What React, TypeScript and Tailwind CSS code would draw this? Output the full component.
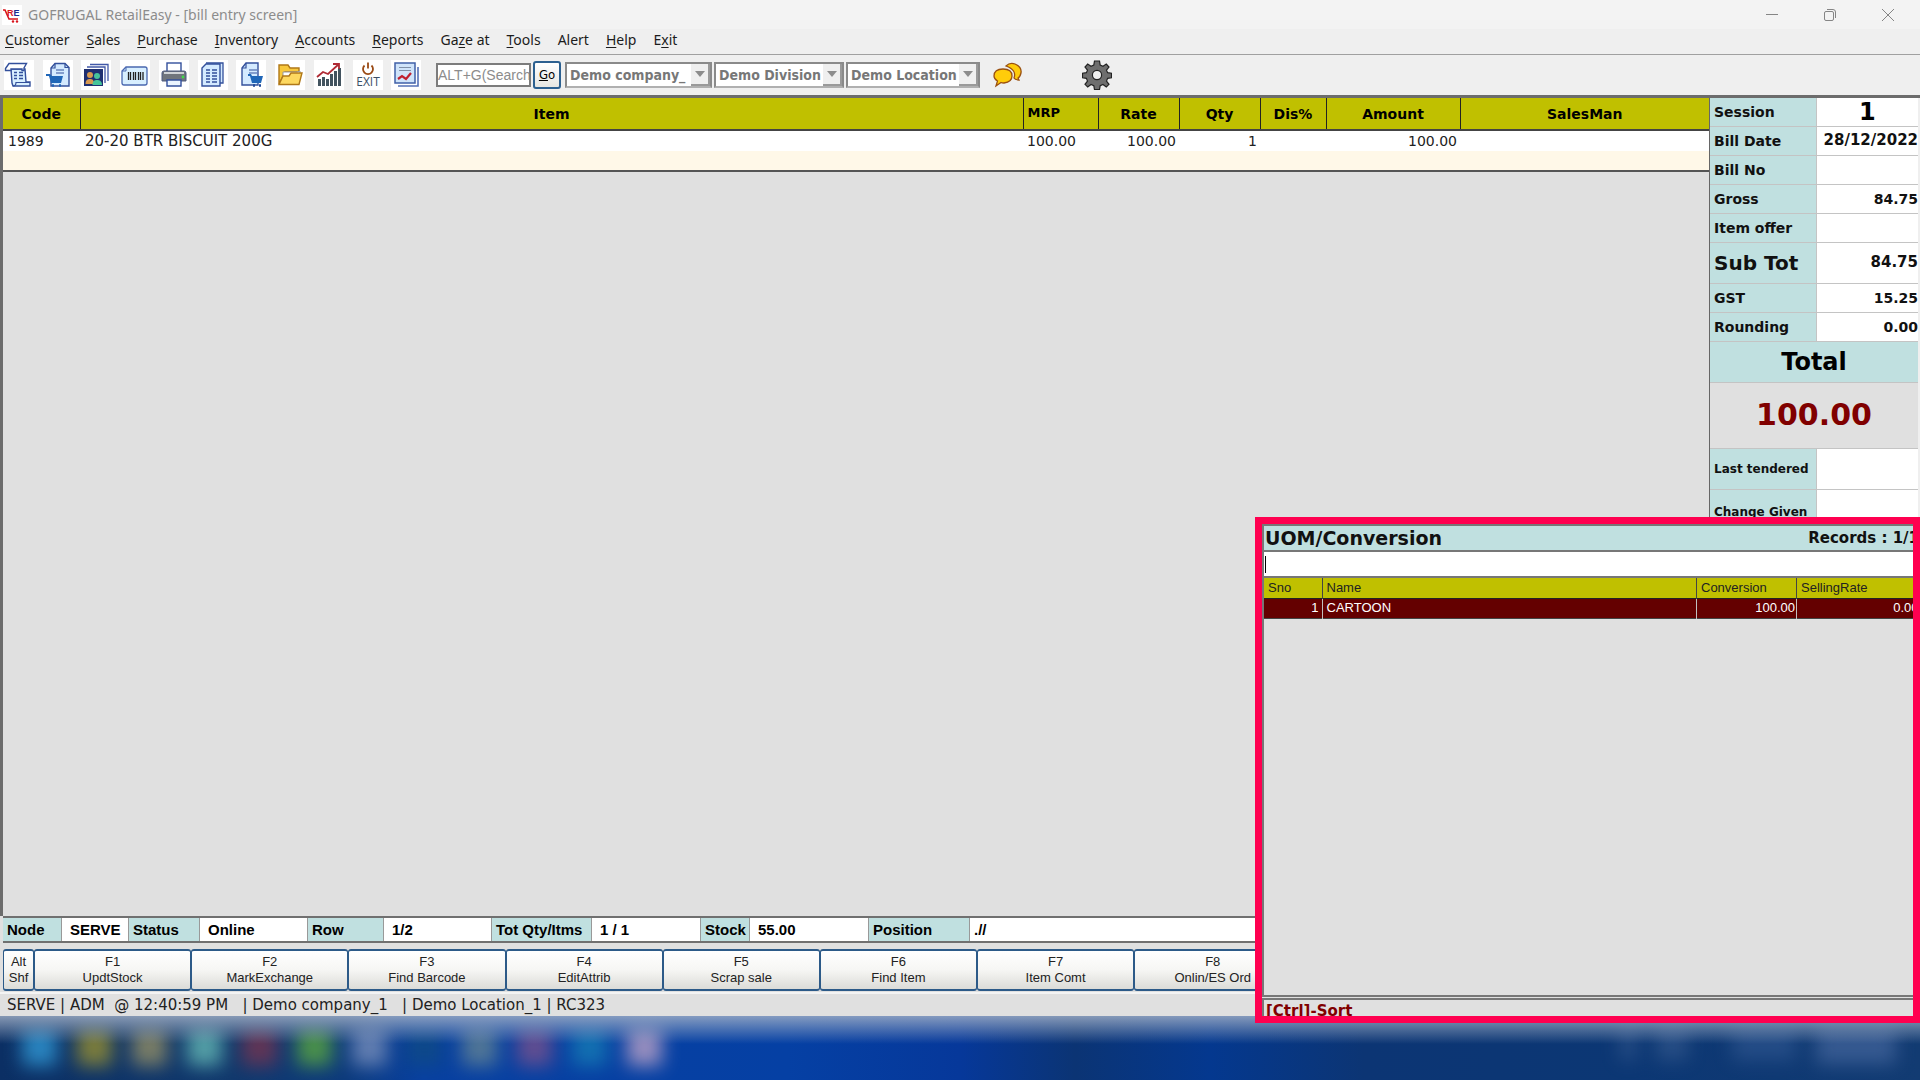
import type { ReactNode } from 'react';

const MENUS = [
  { label: 'Customer', key: 0 },
  { label: 'Sales', key: 0 },
  { label: 'Purchase', key: 0 },
  { label: 'Inventory', key: 0 },
  { label: 'Accounts', key: 0 },
  { label: 'Reports', key: 0 },
  { label: 'Gaze at', key: 2 },
  { label: 'Tools', key: 0 },
  { label: 'Alert', key: -1 },
  { label: 'Help', key: 0 },
  { label: 'Exit', key: 1 },
];

const F_KEYS = [
  ['F1', 'UpdtStock'],
  ['F2', 'MarkExchange'],
  ['F3', 'Find Barcode'],
  ['F4', 'EditAttrib'],
  ['F5', 'Scrap sale'],
  ['F6', 'Find Item'],
  ['F7', 'Item Comt'],
  ['F8', 'Onlin/ES Ord'],
];

const STATUS = [
  { label: 'Node', value: 'SERVE', labelW: 'w-[59px]', valueW: 'w-[67px]', pad: 'pl-2' },
  { label: 'Status', value: 'Online', labelW: 'w-[71px]', valueW: 'w-[108px]', pad: 'pl-2' },
  { label: 'Row', value: '1/2', labelW: 'w-[76px]', valueW: 'w-[108px]', pad: 'pl-2' },
  { label: 'Tot Qty/Itms', value: '1 / 1', labelW: 'w-[100px]', valueW: 'w-[109px]', pad: 'pl-2' },
  { label: 'Stock', value: '55.00', labelW: 'w-[49px]', valueW: 'w-[119px]', pad: 'pl-2' },
  { label: 'Position', value: './/', labelW: 'w-[101px]', valueW: 'flex-1', pad: 'pl-1' },
];

const TASK_ICONS = [
  'bg-[#2f93cf]',
  'bg-[#8f8a35]',
  'bg-[#8c8a66]',
  'bg-[#5fb0b0]',
  'bg-[#6f3552]',
  'bg-[#55a043]',
  'bg-[#7089b8]',
  'bg-[#0f4a86]',
  'bg-[#5d7f95]',
  'bg-[#70508f]',
  'bg-[#1578b4]',
  'bg-[#b09cc4]',
];

function ReceiptIcon() {
  return (
    <>
      <path d="M7 9h14l1 13h4v4H9l-1-3z" fill="#d8efff" stroke="#33509c" strokeWidth="1.4" />
      <path d="M9 26q3 0 3-3.500h14" stroke="#33509c" strokeWidth="1.200" />
      <path d="M1.500 8.500 5 3.500h17.500L20 8v2.500h-2V9H7v1.500H1.500z" fill="#fff" stroke="#33509c" strokeWidth="1.4" />
      <path d="M10 12.500h3m2 0h4m-9 3h3m2 0h4m-9 3h3m2 0h4" stroke="#33509c" strokeWidth="1.500" />
    </>
  );
}

function PageCartIcon({ flip }: { flip?: boolean }) {
  return (
    <>
      <path d={flip ? 'M12 3.500h10l4 4V26H8V8z' : 'M10 3h12v22H6V8z'} fill="#d4eaff" stroke="#33509c" strokeWidth="1.4" />
      <path d={flip ? 'M12 3.500V8H8m14-4.500v4h4' : 'M10 3v5H6'} stroke="#33509c" strokeWidth="1.200" />
      <path d="M13 10h8m-8 3h8" stroke="#33509c" strokeWidth="1.200" />
      {flip ? (
        <>
          <path d="M3 14h4l2 2h11l-2 7H8L6 16H3z" fill="#1f66b8" />
          <path d="M9 25.500h2m5 0h2" stroke="#1f66b8" strokeWidth="2.500" />
        </>
      ) : (
        <>
          <path d="M12 14h3l1 2h11l-2 7h-9l-2-7h-2z" fill="#1f66b8" />
          <path d="M17 25.500h2m4 0h2" stroke="#1f4a98" strokeWidth="2.500" />
        </>
      )}
    </>
  );
}

function CustomersIcon() {
  return (
    <>
      <path d="M9 4.500h18V21" stroke="#4158a8" strokeWidth="1.300" fill="none" />
      <path d="M6 7h18v16" stroke="#4158a8" strokeWidth="1.300" fill="none" />
      <rect x="3" y="9" width="19" height="17" fill="#1f2f70" />
      <circle cx="9" cy="15" r="3" fill="#d89a50" />
      <path d="M4.500 24c0-4 2-5 4.500-5s4 1 4 5z" fill="#d89a50" />
      <circle cx="16" cy="16" r="3" fill="#46c49a" />
      <path d="M11.500 25c0-4 2-5 4.500-5s5 1 5 5z" fill="#46c49a" />
    </>
  );
}

function BarcodeIcon() {
  return (
    <>
      <path d="M6 7h19q2 0 2 2v14q0 2-2 2H4q-2 0-2-2V11z" fill="#d8efff" stroke="#4a68b0" strokeWidth="1.300" />
      <path d="M2 11h4V7" stroke="#4a68b0" fill="none" />
      <path d="M8.500 12v8m2-8v8m3-8v8m2-8v8m3-8v8m2-8v8m2.500-8v8" stroke="#222" strokeWidth="1.300" />
    </>
  );
}

function PrinterIcon() {
  return (
    <>
      <rect x="8" y="3" width="14" height="9" fill="#fff" stroke="#33509c" strokeWidth="1.400" />
      <path d="M3 13q0-2 2-2h20q2 0 2 2v8H3z" fill="#70757c" stroke="#4d5a80" />
      <path d="M5 13h20" stroke="#d0d4d8" strokeWidth="2" />
      <circle cx="24" cy="17" r="1.400" fill="#3fdc4a" />
      <path d="M8 20h14v6H8z" fill="#eaf4ff" stroke="#33509c" strokeWidth="1.400" />
    </>
  );
}

function PagesIcon() {
  return (
    <>
      <path d="M8 3h17v20h-3" fill="#d4eaff" stroke="#33509c" strokeWidth="1.300" />
      <path d="M8 4h14v22H4V8z" fill="#d4eaff" stroke="#33509c" strokeWidth="1.400" />
      <path d="M8 10h4m2 0h5M8 13h4m2 0h5M8 16h4m2 0h5M8 19h4m2 0h5M8 22h4m2 0h5" stroke="#33509c" strokeWidth="1.300" />
    </>
  );
}

function FolderIcon() {
  return (
    <>
      <path d="M4 24V5h9l2 3h9v4H10z" fill="#f8c83c" stroke="#b07818" strokeWidth="1.400" />
      <path d="M8 12h14l3-1v6H8z" fill="#fff" stroke="#999" />
      <path d="M4 24.500 8 16h6l2-3h11l-3 11.500z" fill="#fdd860" stroke="#b07818" strokeWidth="1.400" />
    </>
  );
}

function GrowthIcon() {
  return (
    <>
      <path d="M5.500 26v-7m4 7v-9m4 9v-7m4 7V14m4 12V11m4 15V8" stroke="#42535f" strokeWidth="3" />
      <path d="m3 17 6-5 5 2L25 4m-6 0h6v5" stroke="#b02a34" strokeWidth="1.800" fill="none" />
    </>
  );
}

function ExitIcon() {
  return (
    <>
      <path d="M11.500 5.500a5 5 0 1 0 7 0M15 2.500v6" stroke="#9a4a14" strokeWidth="1.800" fill="none" />
      <text x="15" y="26" textAnchor="middle" fontSize="12" fontFamily="Open Sans, sans-serif" fill="#3c4f66">
        EXIT
      </text>
    </>
  );
}

function ReportIcon() {
  return (
    <>
      <path d="M7 26h20V7" stroke="#5672b8" strokeWidth="1.600" fill="none" />
      <rect x="4" y="3" width="20" height="20" fill="#d0e4fa" stroke="#4060a8" strokeWidth="1.500" />
      <path d="M8 7.500h12M8 10.500h12" stroke="#8090a8" strokeWidth="1.200" />
      <path d="m7 19 4-3 4 3 5-6" stroke="#c02030" strokeWidth="2.200" fill="none" />
    </>
  );
}

const TOOLS: { name: string; icon: ReactNode }[] = [
  { name: 'Bill entry', icon: <ReceiptIcon /> },
  { name: 'Purchase entry', icon: <PageCartIcon flip /> },
  { name: 'Customers', icon: <CustomersIcon /> },
  { name: 'Barcode', icon: <BarcodeIcon /> },
  { name: 'Print', icon: <PrinterIcon /> },
  { name: 'Documents', icon: <PagesIcon /> },
  { name: 'Orders', icon: <PageCartIcon /> },
  { name: 'Open', icon: <FolderIcon /> },
  { name: 'Growth', icon: <GrowthIcon /> },
  { name: 'Exit', icon: <ExitIcon /> },
  { name: 'Reports', icon: <ReportIcon /> },
];

function TitleBar() {
  return (
    <header className="flex h-[29px] shrink-0 items-center bg-[#f3f3f3] pl-[2px] pr-[3px]">
      <svg viewBox="0 0 20 20" className="size-5 bg-white" aria-hidden="true">
        <path d="M1 5h2l4 9h9" stroke="#d8141c" strokeWidth="1.600" fill="none" />
        <text x="5" y="11" fontSize="9" fontWeight="800" fontFamily="Liberation Sans, sans-serif">
          <tspan fill="#d8141c">R</tspan>
          <tspan fill="#1c2a90">E</tspan>
        </text>
        <circle cx="11" cy="16.500" r="1.200" fill="#d8141c" />
        <circle cx="15" cy="16.500" r="1.200" fill="#d8141c" />
      </svg>
      <h1 className="ml-[6px] flex-1 font-['Noto_Sans',sans-serif] text-sm text-[#8c8c8c]">
        GOFRUGAL RetailEasy - [bill entry screen]
      </h1>
      {[
        { name: 'Minimize', d: 'M2 7.500h12' },
        { name: 'Restore', d: 'M2.500 6q0-1.500 1.500-1.500h6q1.500 0 1.500 1.500v6q0 1.500-1.500 1.500H4q-1.500 0-1.500-1.500zM5 2.500h6q2.500 0 2.500 2.500v6' },
        { name: 'Close', d: 'm2 2 12 12M14 2 2 14' },
      ].map((b) => (
        <button key={b.name} aria-label={b.name} className="flex h-full w-[58px] items-center justify-center">
          <svg viewBox="0 0 16 16" className="size-4" fill="none" stroke="#858585">
            <path d={b.d} />
          </svg>
        </button>
      ))}
    </header>
  );
}

function MenuBar() {
  return (
    <nav className="flex h-[26px] shrink-0 items-center gap-[17px] border-b border-[#a0a0a0] bg-[#efefef] pb-1 pl-[5px] font-['Noto_Sans',sans-serif] text-sm text-[#1c1c1c]">
      {MENUS.map((m) => (
        <button key={m.label} className="whitespace-nowrap">
          {m.key < 0 ? (
            m.label
          ) : (
            <>
              {m.label.slice(0, m.key)}
              <u className="underline-offset-2">{m.label[m.key]}</u>
              {m.label.slice(m.key + 1)}
            </>
          )}
        </button>
      ))}
    </nav>
  );
}

function Combo({ name, value, width }: { name: string; value: string; width: string }) {
  return (
    <label className={`flex h-[26px] border-2 border-[#8a8a8a] border-b-[#b0b0b0] bg-white ${width}`}>
      <select
        aria-label={name}
        className="min-w-0 flex-1 appearance-none overflow-hidden pl-[3px] font-['DejaVu_Sans_Condensed','Noto_Sans',sans-serif] text-sm font-bold text-[#777]"
      >
        <option>{value}</option>
      </select>
      <span className="pointer-events-none flex w-[19px] items-center justify-center border-b-2 border-r-2 border-[#9a9a9a] bg-[#efefef]">
        <svg viewBox="0 0 10 6" className="h-[6px] w-[10px]" fill="#8c8c8c">
          <path d="M0 0h10L5 6z" />
        </svg>
      </span>
    </label>
  );
}

function Toolbar() {
  return (
    <div className="flex h-10 shrink-0 items-center bg-[#efefef] pb-px pl-1">
      <div className="grid w-[426px] grid-cols-11">
        {TOOLS.map((t) => (
          <button key={t.name} aria-label={t.name} className="size-[30px] bg-white">
            <svg viewBox="0 0 30 30" className="size-[30px]" fill="none">
              {t.icon}
            </svg>
          </button>
        ))}
      </div>
      <input
        aria-label="Menu search"
        placeholder="ALT+G(Search"
        className="ml-[6px] h-6 w-[95px] border-2 border-[#7c7c7c] bg-white font-['Liberation_Sans',sans-serif] text-sm placeholder:text-[#8c8c8c]"
      />
      <button className="ml-[2px] h-7 w-[28px] rounded-[3px] border-2 border-[#2c6090] bg-gradient-to-b from-white to-[#e6e6e2] font-['DejaVu_Sans_Condensed','Noto_Sans',sans-serif] text-[13px] text-black">
        <u>G</u>o
      </button>
      <div className="ml-1 flex gap-[2px]">
        <Combo name="Company" value="Demo company_" width="w-[147px]" />
        <Combo name="Division" value="Demo Division" width="w-[130px]" />
        <Combo name="Location" value="Demo Location" width="w-[134px]" />
      </div>
      <button aria-label="Chat" className="ml-[13px]">
        <svg viewBox="0 0 30 26" className="h-[26px] w-[30px]" fill="#ffcc0a" stroke="#9a5010" strokeWidth="1.300">
          <path d="M13 4Q17 0 22 2q7 3 6 9-1 4-3 5l1 2q-4 0-5-2 3-8-8-12z" />
          <path d="M10 7q9 0 9 7 0 6-8 7-2 0-3-.500L3 24l1.500-5Q1 17 1 14q0-7 9-7z" />
        </svg>
      </button>
      <button aria-label="Settings" className="ml-[59px]">
        <svg viewBox="0 0 30 30" className="size-[30px]" stroke="#222" strokeWidth="1.200">
          <path
            fill="#6e6e6e"
            d="M12.500 1h5l.7 4 2.800 1.200L24.300 4 27 7l-2.500 3.200 1.100 2.500 3.900.5v4.600l-3.900.5-1.100 2.800L27 24.300 24.300 27 21 24.500l-2.800 1.200-.7 3.800h-5l-.7-3.800L9 24.500 5.700 27 3 24.300l2.500-3.200-1.100-2.800-3.900-.5v-4.600l3.900-.5 1.100-2.500L3 7l2.700-3L9 6.200 11.800 5z"
          />
          <circle cx="15" cy="15" r="4.600" fill="#efefef" />
        </svg>
      </button>
    </div>
  );
}

function BillTable() {
  const th = 'border-r border-[#222] last:border-r-0';
  return (
    <table className="w-full table-fixed border-collapse text-sm">
      <colgroup>
        <col className="w-[77px]" />
        <col />
        <col className="w-[75px]" />
        <col className="w-[81px]" />
        <col className="w-[81px]" />
        <col className="w-[66px]" />
        <col className="w-[134px]" />
        <col className="w-[249px]" />
      </colgroup>
      <thead>
        <tr className="h-8 border-b-2 border-[#444] bg-[#c0c000] text-black">
          <th className={th}>Code</th>
          <th className={th}>Item</th>
          <th className={`${th} pl-1 text-left text-[13px]`}>MRP</th>
          <th className={th}>Rate</th>
          <th className={th}>Qty</th>
          <th className={th}>Dis%</th>
          <th className={th}>Amount</th>
          <th className={th}>SalesMan</th>
        </tr>
      </thead>
      <tbody className="text-[#222]">
        <tr className="h-5 bg-white leading-5">
          <td className="pl-[5px]">1989</td>
          <td className="pl-[5px] text-[15px] leading-5">20-20 BTR BISCUIT 200G</td>
          <td className="pl-1">100.00</td>
          <td className="pr-[3px] text-right">100.00</td>
          <td className="pr-[3px] text-right">1</td>
          <td />
          <td className="pr-[3px] text-right">100.00</td>
          <td />
        </tr>
        <tr className="h-5 border-b-2 border-[#555] bg-[#fff8e8]">
          <td colSpan={8} />
        </tr>
      </tbody>
    </table>
  );
}

function SummaryRow({
  label,
  value,
  height = 'h-[29px]',
  labelClass = 'text-sm',
  valueClass = 'text-right text-sm',
}: {
  label: string;
  value?: string;
  height?: string;
  labelClass?: string;
  valueClass?: string;
}) {
  return (
    <tr className={`border-b border-[#c4c4c4] ${height}`}>
      <th className={`w-[106px] border-r border-[#c4c4c4] bg-[#c0e0e0] py-0 pl-1 text-left leading-none whitespace-nowrap ${labelClass}`}>
        {label}
      </th>
      <td className={`bg-white py-0 leading-none font-bold ${valueClass}`}>{value}</td>
    </tr>
  );
}

function Summary() {
  return (
    <aside className="w-[211px] shrink-0 border-l border-[#666] bg-[#efefef] pr-[2px] text-[#111]">
      <table className="w-full table-fixed border-collapse">
        <tbody>
          <SummaryRow label="Session" value="1" height="h-[28px]" valueClass="text-center text-2xl text-black" />
          <SummaryRow label="Bill Date" value="28/12/2022" valueClass="text-right text-[15px]" />
          <SummaryRow label="Bill No" />
          <SummaryRow label="Gross" value="84.75" />
          <SummaryRow label="Item offer" />
          <SummaryRow label="Sub Tot" value="84.75" height="h-[41px]" labelClass="text-xl" valueClass="text-right text-[15px]" />
          <SummaryRow label="GST" value="15.25" />
          <SummaryRow label="Rounding" value="0.00" />
          <tr className="h-[41px] border-b border-[#c4c4c4]">
            <th colSpan={2} className="bg-[#c0e0e0] py-0 text-2xl leading-none text-black">
              Total
            </th>
          </tr>
          <tr className="h-[66px] border-b border-[#c4c4c4]">
            <td colSpan={2} className="bg-[#e0e0e0] py-0 text-center text-3xl leading-none font-bold text-[#800000]">
              100.00
            </td>
          </tr>
          <SummaryRow label="Last tendered" height="h-[41px]" labelClass="text-xs" />
          <SummaryRow label="Change Given" height="h-[46px]" labelClass="text-xs" />
        </tbody>
      </table>
    </aside>
  );
}

function StatusRow() {
  return (
    <div className="ml-[3px] flex h-[27px] shrink-0 border-t-2 border-b-2 border-[#707070] bg-white font-['Liberation_Sans',sans-serif] text-[15px] leading-[23px] font-bold whitespace-nowrap text-black">
      {STATUS.map((s) => (
        <div key={s.label} className={s.valueW === 'flex-1' ? 'flex flex-1' : 'flex'}>
          <span className={`border-r border-[#999] bg-[#c0e0e0] pl-1 ${s.labelW}`}>{s.label}</span>
          <span className={`border-r border-[#999] ${s.valueW} ${s.pad}`}>{s.value}</span>
        </div>
      ))}
    </div>
  );
}

function FunctionKeys() {
  const key =
    'h-[42px] rounded-[3px] border border-t-2 border-b-2 border-[#2c5a88] bg-gradient-to-b from-white via-[#f6f6f4] to-[#dcdcd8] text-[13px] leading-4 text-[#222]';
  return (
    <div className="mt-[6px] ml-[3px] flex shrink-0 font-['Liberation_Sans',sans-serif]">
      <button className={`w-[31px] ${key}`}>
        Alt
        <br />
        Shf
      </button>
      <div className="grid flex-1 grid-cols-12">
        {F_KEYS.map(([k, label]) => (
          <button key={k} className={key}>
            {k}
            <br />
            {label}
          </button>
        ))}
      </div>
    </div>
  );
}

function ConversionPopup() {
  const cell = 'border-r border-[#444] px-1 font-normal';
  return (
    <section className="absolute right-0 bottom-[57px] z-10 flex h-[506px] w-[665px] flex-col border-[7px] border-[#ff0050] bg-[#e0e0e0]">
      <div className="flex h-[28px] shrink-0 items-center justify-between overflow-hidden border-t-2 border-b-2 border-l-2 border-[#777] bg-[#c0e0e0] text-[#111]">
        <h2 className="pl-px text-[19px] leading-none font-bold">UOM/Conversion</h2>
        <span className="-mr-[6px] text-[15px] font-bold">Records : 1/1</span>
      </div>
      <div className="flex h-[24px] shrink-0 items-center border-l-2 border-[#777] bg-white pl-px">
        <span className="h-[17px] w-px bg-black" />
        <input aria-label="Find unit" className="h-full min-w-0 flex-1 outline-none" />
      </div>
      <div className="flex-1 overflow-hidden border-t-2 border-b-2 border-l-2 border-[#777]">
        <table className="w-[660px] table-fixed border-collapse font-['Liberation_Sans',sans-serif] text-[13px] leading-[18px]">
          <colgroup>
            <col className="w-[58px]" />
            <col />
            <col className="w-[100px]" />
            <col className="w-[127px]" />
          </colgroup>
          <thead>
            <tr className="h-5 border-b border-[#222] bg-[#c0c000] text-left text-[#222]">
              <th className={cell}>Sno</th>
              <th className={cell}>Name</th>
              <th className={cell}>Conversion</th>
              <th className={cell}>SellingRate</th>
            </tr>
          </thead>
          <tbody>
            <tr className="h-5 border-b border-[#444] bg-[#640000] text-white">
              <td className="border-r border-[#c0c0c0] pr-[3px] text-right">1</td>
              <td className="border-r border-[#c0c0c0] px-1">CARTOON</td>
              <td className="border-r border-[#c0c0c0] pr-px text-right">100.00</td>
              <td className="pr-[5px] text-right">0.00</td>
            </tr>
          </tbody>
        </table>
      </div>
      <div className="mt-px h-[18px] shrink-0 overflow-hidden border-t-2 border-l-2 border-[#777] pl-[2px] text-[15px] leading-[22px] font-bold text-[#800000]">
        [Ctrl]-Sort
      </div>
    </section>
  );
}

function Taskbar() {
  return (
    <footer className="relative h-16 shrink-0 overflow-hidden bg-[linear-gradient(90deg,#0b2f64_0%,#10386c_12%,#0c3a7c_18%,#0840a0_22%,#0540a4_41%,#06389a_50%,#0b3474_56%,#04388f_63%,#0c3574_71%,#0c3774_85%,#123b72_100%)]">
      <div className="flex gap-[20px] pt-3 pl-[22px] opacity-85 blur-[9px]">
        {TASK_ICONS.map((c) => (
          <span key={c} className={`h-[38px] w-[35px] ${c}`} />
        ))}
        <span className="ml-auto h-8 w-4 bg-[#2c5288]" />
        <span className="h-8 w-8 bg-[#2c5288]" />
        <span className="ml-6 h-8 w-16 bg-[#28508a]" />
        <span className="mr-6 h-9 w-20 bg-[#3c5f96]" />
      </div>
      <div className="absolute inset-x-0 top-0 h-7 bg-gradient-to-b from-[#a4b2c8cc] to-transparent" />
    </footer>
  );
}

export default function App() {
  return (
    <div className="relative flex h-screen flex-col overflow-hidden bg-[#e0e0e0] font-['DejaVu_Sans',sans-serif]">
      <TitleBar />
      <MenuBar />
      <Toolbar />
      <main className="flex min-h-0 flex-1 border-t-[3px] border-l-[3px] border-[#6c6c6c]">
        <div className="min-w-0 flex-1">
          <BillTable />
        </div>
        <Summary />
      </main>
      <StatusRow />
      <FunctionKeys />
      <div className="mt-px h-6 shrink-0 border-t-2 border-[#f4f4f4] pl-[7px] text-[15px] leading-[22px] whitespace-pre text-[#222]">
        {'SERVE | ADM  @ 12:40:59 PM   | Demo company_1   | Demo Location_1 | RC323'}
      </div>
      <Taskbar />
      <ConversionPopup />
    </div>
  );
}
